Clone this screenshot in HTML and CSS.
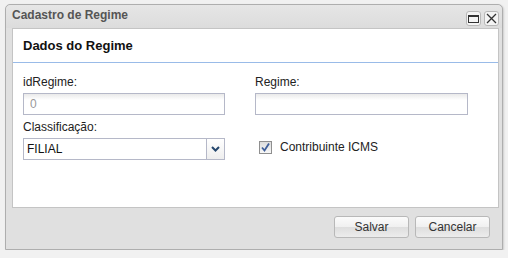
FILE: index.html
```html
<!DOCTYPE html>
<html lang="pt-BR">
<head>
    <meta charset="UTF-8">
    <title>Cadastro de Regime</title>
    <link rel="stylesheet" href="styles.css">
</head>
<body>
    <div class="window">
        <div class="window-header">
            <span class="window-title">Cadastro de Regime</span>
            <div class="tools">
                <span class="tool">
                    <svg width="11" height="9" viewBox="0 0 11 9"><rect x="0.5" y="1.5" width="10" height="7" fill="none" stroke="#333"/><line x1="0" y1="2" x2="11" y2="2" stroke="#333" stroke-width="2"/></svg>
                </span>
                <span class="tool">
                    <svg width="11" height="11" viewBox="0 0 11 11"><path d="M1 1 L10 10 M10 1 L1 10" stroke="#333" stroke-width="1.3"/></svg>
                </span>
            </div>
        </div>

        <div class="panel">
            <div class="panel-header">Dados do Regime</div>
            <div class="panel-body">
                <div class="row">
                    <div class="field">
                        <label>idRegime:</label>
                        <input type="text" value="0" class="disabled" disabled>
                    </div>
                    <div class="field field-right">
                        <label>Regime:</label>
                        <input type="text" class="wide">
                    </div>
                </div>
                <div class="row">
                    <div class="field">
                        <label>Classificação:</label>
                        <div class="combo">
                            <span class="combo-text">FILIAL</span>
                            <span class="combo-trigger">
                                <svg width="9" height="6" viewBox="0 0 9 6"><path d="M1 1 L4.5 4.5 L8 1" fill="none" stroke="#25476d" stroke-width="2"/></svg>
                            </span>
                        </div>
                    </div>
                    <div class="field field-right check-field">
                        <span class="checkbox">
                            <svg width="11" height="11" viewBox="0 0 11 11"><path d="M2 5.5 L4.5 8.5 L9 1.5" fill="none" stroke="#3f5f9a" stroke-width="1.8"/></svg>
                        </span>
                        <span class="check-label">Contribuinte ICMS</span>
                    </div>
                </div>
            </div>
        </div>

        <div class="window-footer">
            <button>Salvar</button>
            <button>Cancelar</button>
        </div>
    </div>
</body>
</html>
```

FILE: styles.css
```css
body {
    margin: 0;
    padding: 4px 0 0 5px;
    background-color: #f1f1f1;
    font-family: "Liberation Sans", Arial, sans-serif;
    font-size: 12px;
}
.window {
    width: 498px;
    height: 246px;
    border: 1px solid #aeaeae;
    border-radius: 5px 5px 0 0;
    background-color: #e0e0e0;
    box-shadow: 1px 1px 2px rgba(0,0,0,0.15);
    display: flex;
    flex-direction: column;
    padding: 0 3px 0 6px;
    box-sizing: border-box;
}
.window-header {
    height: 23px;
    display: flex;
    align-items: center;
    justify-content: space-between;
    background: linear-gradient(#e6e6e6, #dcdcdc);
    margin: 0 -3px 0 -6px;
    padding: 0 3px 0 6px;
    border-radius: 5px 5px 0 0;
}
.window-title {
    font-weight: bold;
    font-size: 12px;
    color: #555;
    padding-bottom: 3px;
}
.tools {
    display: flex;
    gap: 3px;
    padding-top: 3px;
}
.tool {
    width: 15px;
    height: 15px;
    border: 1px solid #b8b8b8;
    border-radius: 3px;
    background-color: #f4f4f4;
    display: flex;
    align-items: center;
    justify-content: center;
    box-sizing: border-box;
}
.panel {
    height: 180px;
    background-color: white;
    border: 1px solid #c4c4c4;
    box-sizing: border-box;
    display: flex;
    flex-direction: column;
}
.panel-header {
    height: 34px;
    line-height: 34px;
    padding-left: 10px;
    font-weight: bold;
    font-size: 13px;
    color: #111;
    border-bottom: 1px solid #99bbe8;
    box-sizing: border-box;
}
.panel-body {
    padding: 11px 0 0 10px;
}
.row {
    display: flex;
    margin-bottom: 4px;
}
.field {
    width: 232px;
}
.field-right {
    width: 215px;
}
label {
    display: block;
    color: #222;
    height: 19px;
    line-height: 16px;
}
input {
    width: 202px;
    height: 22px;
    border: 1px solid #b5b8c8;
    box-sizing: border-box;
    padding: 0 6px;
    font-family: inherit;
    font-size: 12px;
    background: linear-gradient(#eaeaea, #fff 6px);
}
input.wide {
    width: 213px;
}
input.disabled {
    color: #999;
    background: linear-gradient(#eaeaea, #fff 6px);
}
.combo {
    width: 202px;
    height: 22px;
    border: 1px solid #b5b8c8;
    box-sizing: border-box;
    display: flex;
    align-items: center;
}
.combo-text {
    flex: 1;
    padding-left: 3px;
    color: #111;
}
.combo-trigger {
    width: 17px;
    height: 20px;
    border-left: 1px solid #b5b8c8;
    display: flex;
    align-items: center;
    justify-content: center;
    background: linear-gradient(#ffffff, #eeeeee);
}
.check-field {
    display: flex;
    align-items: center;
    padding-top: 15px;
    padding-left: 4px;
    gap: 8px;
}
.checkbox {
    width: 13px;
    height: 13px;
    border: 1px solid #8f8f8f;
    box-sizing: border-box;
    background: linear-gradient(#dcdcdc, #f8f8f8);
    display: flex;
    align-items: center;
    justify-content: center;
}
.check-label {
    color: #222;
}
.window-footer {
    flex: 1;
    display: flex;
    justify-content: flex-end;
    align-items: flex-start;
    padding-top: 8px;
    gap: 6px;
    padding-right: 9px;
}
button {
    width: 75px;
    height: 22px;
    border: 1px solid #b8b8b8;
    border-radius: 3px;
    background: linear-gradient(#fbfbfb 0%, #f0f0f0 50%, #dedede 51%, #ececec 100%);
    font-family: inherit;
    font-size: 12px;
    color: #333;
    padding: 0;
}
```
